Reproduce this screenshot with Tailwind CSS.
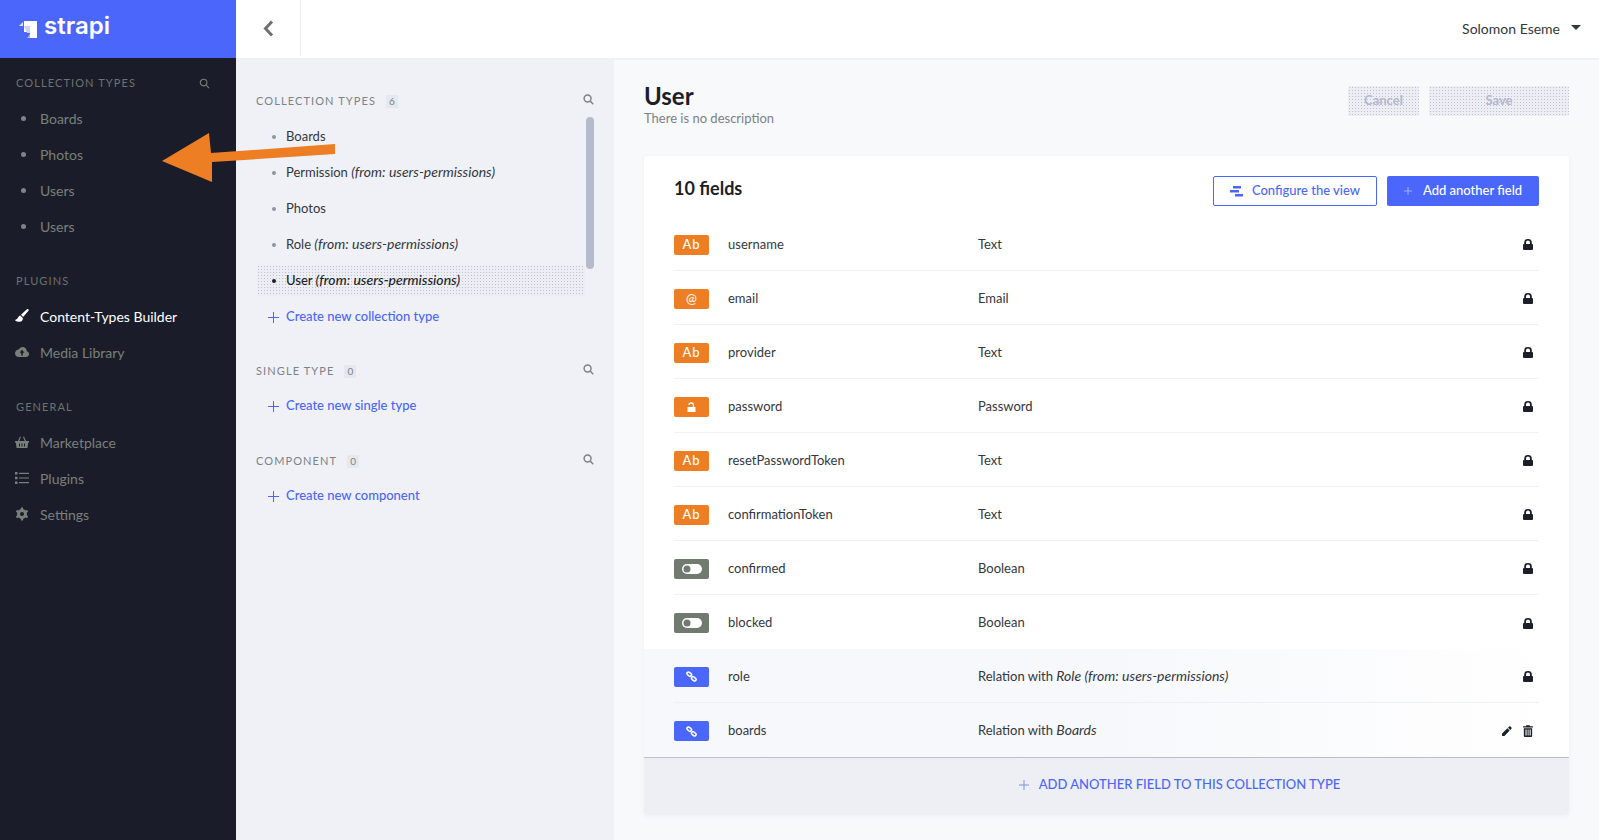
<!DOCTYPE html>
<html lang="en">
<head>
  <meta charset="UTF-8" />
  <title>Strapi - User</title>
  <script src="https://cdn.jsdelivr.net/npm/@tailwindcss/browser@4"></script>
</head>
<body class="[font-family:Lato,sans-serif] h-[840px] w-[1599px] overflow-hidden relative flex bg-[#f8f9fb] text-[13px] text-[#333740]">

  <!-- left nav -->
  <aside class="w-[236px] shrink-0 bg-[#1a1d29] h-full text-[14px] text-[#79807a]">
    <div class="h-[58px] bg-[#4b67fb] flex items-center pl-[18px] gap-[6px]">
      <svg width="20" height="20" viewBox="0 0 20 20"><path d="M6 2h13v17h-7v-6H6z" fill="#fff"/><path d="M6 7h6v7h-3z" fill="#c9d2fe"/><path d="M1 7l4-4v4z" fill="#dfe4fe"/><path d="M12 15v4H9z" fill="#a9b6fd"/></svg>
      <span class="[font-family:Inter,sans-serif] text-[24px] font-semibold text-white leading-none mb-[6px]">strapi</span>
    </div>

    <div class="pt-[17px] px-4 flex items-center justify-between pr-[26px] h-[34px]">
      <span class="text-[11px] tracking-[1.1px] uppercase text-[#6d726d]">Collection Types</span>
      <svg width="11" height="11" viewBox="0 0 12 12" fill="none" stroke="#79807a" stroke-width="1.200"><circle cx="5" cy="5" r="3.600"/><path d="M8 8l3 3"/></svg>
    </div>
    <ul class="pt-[8px]">
      <li class="h-9 flex items-center pl-[21px] gap-[14px]"><span class="size-[5px] rounded-full bg-[#7e857f]"></span>Boards</li>
      <li class="h-9 flex items-center pl-[21px] gap-[14px]"><span class="size-[5px] rounded-full bg-[#7e857f]"></span>Photos</li>
      <li class="h-9 flex items-center pl-[21px] gap-[14px]"><span class="size-[5px] rounded-full bg-[#7e857f]"></span>Users</li>
      <li class="h-9 flex items-center pl-[21px] gap-[14px]"><span class="size-[5px] rounded-full bg-[#7e857f]"></span>Users</li>
    </ul>

    <div class="mt-[28px] pl-4 text-[11px] tracking-[1.1px] uppercase text-[#6d726d] leading-[18px]">Plugins</div>
    <ul class="pt-[8px]">
      <li class="h-9 flex items-center pl-[15px] gap-[11px] text-white">
        <svg width="14" height="14" viewBox="0 0 14 14" fill="#fff"><path d="M13.400.3c-.4-.4-1-.4-1.500 0L6 5.800 8.100 8l5.400-6.200c.3-.4.300-1-.1-1.500z"/><path d="M5.200 6.500C3.300 6.700 3.500 9.600 .5 10.800c-.5.200-.4.700 0 1 2 1.600 6 1.500 7.200-1.100.3-.7.200-1.400-.1-1.900z"/></svg>
        Content-Types Builder
      </li>
      <li class="h-9 flex items-center pl-[15px] gap-[11px]">
        <svg width="14" height="14" viewBox="0 0 14 12" fill="#79807a"><path d="M11.800 5.200C11.700 2.800 9.900 1 7.600 1 5.900 1 4.500 2 3.800 3.400 1.700 3.500 0 5.200 0 7.300 0 9.400 1.800 11 3.800 11h7.100C12.600 11 14 9.700 14 8c0-1.300-.9-2.400-2.200-2.800z"/><path d="M7 3.800L4.500 6.800h1.700V9.500h1.600V6.800h1.700z" fill="#1a1d29"/></svg>
        Media Library
      </li>
    </ul>

    <div class="mt-[28px] pl-4 text-[11px] tracking-[1.1px] uppercase text-[#6d726d] leading-[18px]">General</div>
    <ul class="pt-[8px]">
      <li class="h-9 flex items-center pl-[15px] gap-[11px]">
        <svg width="14" height="14" viewBox="0 0 14 14" fill="#79807a"><path d="M0 6h14v1.500h-.8L12.400 13H1.600L.8 7.500H0z"/><path d="M3 6l2-4.500 1 .4L4.300 6zM11 6L9 1.500l-1 .4L9.700 6z"/><path d="M4.500 8.500v3M7 8.500v3M9.500 8.500v3" stroke="#1a1d29" stroke-width="1"/></svg>
        Marketplace
      </li>
      <li class="h-9 flex items-center pl-[15px] gap-[11px]">
        <svg width="14" height="14" viewBox="0 0 14 14" fill="#79807a"><path d="M0 1h2.500v2.500H0zM0 5.800h2.500v2.500H0zM0 10.500h2.500V13H0zM4 1.700h10v1.200H4zM4 6.400h10v1.200H4zM4 11.100h10v1.200H4z"/></svg>
        Plugins
      </li>
      <li class="h-9 flex items-center pl-[15px] gap-[11px]">
        <svg width="14" height="14" viewBox="0 0 14 14"><circle cx="7" cy="7" r="3.500" fill="none" stroke="#79807a" stroke-width="3"/><path d="M7 7L7 0.500M7 7L7 13.500M7 7L1.400 3.750M7 7l5.600 3.250M7 7l5.600-3.250M7 7l-5.600 3.250" stroke="#79807a" stroke-width="2.200"/><circle cx="7" cy="7" r="2" fill="#1a1d29"/></svg>
        Settings
      </li>
    </ul>
  </aside>

  <div class="flex-1 min-w-0 flex flex-col">
    <!-- top bar -->
    <header class="h-[60px] shrink-0 bg-white border-b-2 border-[#f0f1f4] flex items-center justify-between pb-[2px]">
      <div class="w-[65px] h-full border-r border-[#eeeef1] flex items-center justify-center">
        <svg width="11" height="17" viewBox="0 0 11 17" fill="none" stroke="#6b726c" stroke-width="3"><path d="M9 1.500L2.500 8.500 9 15.500"/></svg>
      </div>
      <div class="flex items-center gap-[11px] pr-[18px] text-[14px] text-[#333740]">
        Solomon Eseme
        <span class="border-x-[5px] border-x-transparent border-t-[5px] border-t-[#333740] mb-[1px]"></span>
      </div>
    </header>

    <div class="flex-1 flex min-h-0">
      <!-- content type list -->
      <section class="w-[378px] shrink-0 bg-[#f0f1f6] text-[#333740] pl-[20px] relative">
        <div class="flex items-center h-4 mt-[33px] pr-[20px]">
          <span class="text-[11px] tracking-[1.1px] uppercase text-[#7c8288]">Collection Types</span>
          <span class="ml-[10px] text-[10px] text-[#7c8288] bg-[#e6e8ef] px-[3px] leading-[13px]">6</span>
          <svg class="ml-auto mb-[4px]" width="11" height="11" viewBox="0 0 12 12" fill="none" stroke="#7c8288" stroke-width="1.600"><circle cx="5" cy="5" r="3.800"/><path d="M8 8l3.200 3.200"/></svg>
        </div>
        <ul class="mt-[10px] w-[328px] ml-[1px]">
          <li class="h-9 flex items-center pl-[15px] gap-[10px]"><span class="size-1 rounded-full bg-[#8f949c]"></span>Boards</li>
          <li class="h-9 flex items-center pl-[15px] gap-[10px]"><span class="size-1 rounded-full bg-[#8f949c]"></span><span class="-mt-[2px]">Permission <i class="text-[14px]">(from: users-permissions)</i></span></li>
          <li class="h-9 flex items-center pl-[15px] gap-[10px]"><span class="size-1 rounded-full bg-[#8f949c]"></span>Photos</li>
          <li class="h-9 flex items-center pl-[15px] gap-[10px]"><span class="size-1 rounded-full bg-[#8f949c]"></span><span class="-mt-[2px]">Role <i class="text-[14px]">(from: users-permissions)</i></span></li>
          <li class="h-[31px] mt-[2px] mb-[3px] flex items-center pl-[15px] gap-[10px] bg-[radial-gradient(#bcc1d4_0.8px,#eceef4_0.8px)] bg-[length:3px_3px] text-[#1c1e28] font-medium"><span class="size-1 rounded-full bg-[#1c1e28]"></span><span class="-mt-[2px]">User <i class="text-[14px]">(from: users-permissions)</i></span></li>
        </ul>
        <div class="h-9 flex items-center pl-[12px] gap-[7px] text-[#4b67fb] font-medium"><svg width="11" height="11" viewBox="0 0 11 11" stroke="#4b67fb"><path d="M5.500 0v11M0 5.500h11"/></svg>Create new collection type</div>
        <div class="absolute left-[350px] top-[57px] w-2 h-[152px] rounded-full bg-[#b5bacd]"></div>

        <div class="flex items-center h-4 mt-[28px] pr-[20px]">
          <span class="text-[11px] tracking-[1.1px] uppercase text-[#7c8288]">Single Type</span>
          <span class="ml-[10px] text-[10px] text-[#7c8288] bg-[#e6e8ef] px-[3px] leading-[13px]">0</span>
          <svg class="ml-auto mb-[4px]" width="11" height="11" viewBox="0 0 12 12" fill="none" stroke="#7c8288" stroke-width="1.600"><circle cx="5" cy="5" r="3.800"/><path d="M8 8l3.200 3.200"/></svg>
        </div>
        <div class="h-9 mt-[9px] flex items-center pl-[12px] gap-[7px] text-[#4b67fb] font-medium"><svg width="11" height="11" viewBox="0 0 11 11" stroke="#4b67fb"><path d="M5.500 0v11M0 5.500h11"/></svg>Create new single type</div>

        <div class="flex items-center h-4 mt-[29px] pr-[20px]">
          <span class="text-[11px] tracking-[1.1px] uppercase text-[#7c8288]">Component</span>
          <span class="ml-[10px] text-[10px] text-[#7c8288] bg-[#e6e8ef] px-[3px] leading-[13px]">0</span>
          <svg class="ml-auto mb-[4px]" width="11" height="11" viewBox="0 0 12 12" fill="none" stroke="#7c8288" stroke-width="1.600"><circle cx="5" cy="5" r="3.800"/><path d="M8 8l3.200 3.200"/></svg>
        </div>
        <div class="h-9 mt-[9px] flex items-center pl-[12px] gap-[7px] text-[#4b67fb] font-medium"><svg width="11" height="11" viewBox="0 0 11 11" stroke="#4b67fb"><path d="M5.500 0v11M0 5.500h11"/></svg>Create new component</div>
      </section>

      <!-- field editor -->
      <main class="flex-1 min-w-0 pl-[30px] pr-[30px]">
        <div class="flex justify-between items-start h-[96px]">
          <div class="pt-[22px]">
            <h1 class="text-[24px] font-bold text-[#1c1e28] leading-[28px]">User</h1>
            <p class="text-[13px] text-[#7c8288] leading-[16px]">There is no description</p>
          </div>
          <div class="flex gap-[10px] pt-[26px] font-bold text-[#b3b8cc]">
            <button class="w-[71px] h-[30px] bg-[radial-gradient(#bcc1d4_0.8px,#eceef4_0.8px)] bg-[length:3px_3px] rounded-[2px]">Cancel</button>
            <button class="w-[140px] h-[30px] bg-[radial-gradient(#bcc1d4_0.8px,#eceef4_0.8px)] bg-[length:3px_3px] rounded-[2px]">Save</button>
          </div>
        </div>

        <div class="bg-white rounded-[3px] shadow-[0_1px_4px_rgba(230,232,240,0.6)] overflow-hidden">
          <div class="h-[50px] flex items-end justify-between px-[30px]">
            <h2 class="text-[18px] font-bold text-[#1c1e28] mb-[6px] leading-[24px]">10 fields</h2>
            <div class="flex gap-[10px]">
              <button class="w-[164px] h-[30px] border border-[#4b67fb] rounded-[2px] bg-white text-[#4b67fb] font-medium flex items-center justify-center gap-[9px]">
                <svg width="13" height="11" viewBox="0 0 13 11" fill="#4b67fb"><path d="M3 0h8v2.500H3zM0 4h9v2.500H0zM5 8h8v2.500H5z"/></svg>
                Configure the view
              </button>
              <button class="w-[152px] h-[30px] rounded-[2px] bg-[#4b67fb] text-white font-medium flex items-center justify-center gap-[11px]">
                <svg width="8" height="8" viewBox="0 0 9 9" stroke="#aab6fd"><path d="M4.500 0v9M0 4.500h9"/></svg>
                Add another field
              </button>
            </div>
          </div>

          <div class="mt-[11px]">
            <div class="h-[54px] pt-[2px] mx-[30px] border-b border-[#f1f1f4] flex items-center">
              <span class="w-[35px] h-5 rounded-[2px] bg-[#ee7e23] text-white text-[13px] font-medium tracking-[1px] flex items-center justify-center">Ab</span>
              <span class="w-[250px] pl-[19px] shrink-0 text-[#333740] box-content">username</span>
              <span>Text</span>
              <svg class="ml-auto mr-[6px]" width="10" height="11" viewBox="0 0 10 11"><path d="M1.200 5V3.400a3.800 3.400 0 0 1 7.600 0V5h.2a1 1 0 0 1 1 1v4a1 1 0 0 1-1 1H1a1 1 0 0 1-1-1V6a1 1 0 0 1 1-1zm1.800 0h4V3.400a2 1.800 0 0 0-4 0z" fill="#1c1e28"/></svg>
            </div>
            <div class="h-[54px] pt-[2px] mx-[30px] border-b border-[#f1f1f4] flex items-center">
              <span class="w-[35px] h-5 rounded-[2px] bg-[#ee7e23] text-white text-[13px] flex items-center justify-center">@</span>
              <span class="w-[250px] pl-[19px] shrink-0 box-content">email</span>
              <span>Email</span>
              <svg class="ml-auto mr-[6px]" width="10" height="11" viewBox="0 0 10 11"><path d="M1.200 5V3.400a3.800 3.400 0 0 1 7.600 0V5h.2a1 1 0 0 1 1 1v4a1 1 0 0 1-1 1H1a1 1 0 0 1-1-1V6a1 1 0 0 1 1-1zm1.800 0h4V3.400a2 1.800 0 0 0-4 0z" fill="#1c1e28"/></svg>
            </div>
            <div class="h-[54px] pt-[2px] mx-[30px] border-b border-[#f1f1f4] flex items-center">
              <span class="w-[35px] h-5 rounded-[2px] bg-[#ee7e23] text-white text-[13px] font-medium tracking-[1px] flex items-center justify-center">Ab</span>
              <span class="w-[250px] pl-[19px] shrink-0 box-content">provider</span>
              <span>Text</span>
              <svg class="ml-auto mr-[6px]" width="10" height="11" viewBox="0 0 10 11"><path d="M1.200 5V3.400a3.800 3.400 0 0 1 7.600 0V5h.2a1 1 0 0 1 1 1v4a1 1 0 0 1-1 1H1a1 1 0 0 1-1-1V6a1 1 0 0 1 1-1zm1.800 0h4V3.400a2 1.800 0 0 0-4 0z" fill="#1c1e28"/></svg>
            </div>
            <div class="h-[54px] pt-[2px] mx-[30px] border-b border-[#f1f1f4] flex items-center">
              <span class="w-[35px] h-5 rounded-[2px] bg-[#ee7e23] flex items-center justify-center">
                <svg width="9" height="10" viewBox="0 0 9 10"><rect x="0.500" y="5" width="8" height="5" rx="0.500" fill="#fff"/><path d="M2 3a2.200 2.200 0 0 1 4.400 0v2" fill="none" stroke="#fff" stroke-width="1.200"/></svg>
              </span>
              <span class="w-[250px] pl-[19px] shrink-0 box-content">password</span>
              <span>Password</span>
              <svg class="ml-auto mr-[6px]" width="10" height="11" viewBox="0 0 10 11"><path d="M1.200 5V3.400a3.800 3.400 0 0 1 7.600 0V5h.2a1 1 0 0 1 1 1v4a1 1 0 0 1-1 1H1a1 1 0 0 1-1-1V6a1 1 0 0 1 1-1zm1.800 0h4V3.400a2 1.800 0 0 0-4 0z" fill="#1c1e28"/></svg>
            </div>
            <div class="h-[54px] pt-[2px] mx-[30px] border-b border-[#f1f1f4] flex items-center">
              <span class="w-[35px] h-5 rounded-[2px] bg-[#ee7e23] text-white text-[13px] font-medium tracking-[1px] flex items-center justify-center">Ab</span>
              <span class="w-[250px] pl-[19px] shrink-0 box-content">resetPasswordToken</span>
              <span>Text</span>
              <svg class="ml-auto mr-[6px]" width="10" height="11" viewBox="0 0 10 11"><path d="M1.200 5V3.400a3.800 3.400 0 0 1 7.600 0V5h.2a1 1 0 0 1 1 1v4a1 1 0 0 1-1 1H1a1 1 0 0 1-1-1V6a1 1 0 0 1 1-1zm1.800 0h4V3.400a2 1.800 0 0 0-4 0z" fill="#1c1e28"/></svg>
            </div>
            <div class="h-[54px] pt-[2px] mx-[30px] border-b border-[#f1f1f4] flex items-center">
              <span class="w-[35px] h-5 rounded-[2px] bg-[#ee7e23] text-white text-[13px] font-medium tracking-[1px] flex items-center justify-center">Ab</span>
              <span class="w-[250px] pl-[19px] shrink-0 box-content">confirmationToken</span>
              <span>Text</span>
              <svg class="ml-auto mr-[6px]" width="10" height="11" viewBox="0 0 10 11"><path d="M1.200 5V3.400a3.800 3.400 0 0 1 7.600 0V5h.2a1 1 0 0 1 1 1v4a1 1 0 0 1-1 1H1a1 1 0 0 1-1-1V6a1 1 0 0 1 1-1zm1.800 0h4V3.400a2 1.800 0 0 0-4 0z" fill="#1c1e28"/></svg>
            </div>
            <div class="h-[54px] pt-[2px] mx-[30px] border-b border-[#f1f1f4] flex items-center">
              <span class="w-[35px] h-5 rounded-[2px] bg-[#717a6f] flex items-center justify-center">
                <svg width="20" height="10" viewBox="0 0 20 10"><rect width="20" height="10" rx="5" fill="#fff"/><circle cx="5" cy="5" r="3.500" fill="#717a6f"/></svg>
              </span>
              <span class="w-[250px] pl-[19px] shrink-0 box-content">confirmed</span>
              <span>Boolean</span>
              <svg class="ml-auto mr-[6px]" width="10" height="11" viewBox="0 0 10 11"><path d="M1.200 5V3.400a3.800 3.400 0 0 1 7.600 0V5h.2a1 1 0 0 1 1 1v4a1 1 0 0 1-1 1H1a1 1 0 0 1-1-1V6a1 1 0 0 1 1-1zm1.800 0h4V3.400a2 1.800 0 0 0-4 0z" fill="#1c1e28"/></svg>
            </div>
            <div class="h-[54px] pt-[2px] mx-[30px] flex items-center">
              <span class="w-[35px] h-5 rounded-[2px] bg-[#717a6f] flex items-center justify-center">
                <svg width="20" height="10" viewBox="0 0 20 10"><rect width="20" height="10" rx="5" fill="#fff"/><circle cx="5" cy="5" r="3.500" fill="#717a6f"/></svg>
              </span>
              <span class="w-[250px] pl-[19px] shrink-0 box-content">blocked</span>
              <span>Boolean</span>
              <svg class="ml-auto mr-[6px]" width="10" height="11" viewBox="0 0 10 11"><path d="M1.200 5V3.400a3.800 3.400 0 0 1 7.600 0V5h.2a1 1 0 0 1 1 1v4a1 1 0 0 1-1 1H1a1 1 0 0 1-1-1V6a1 1 0 0 1 1-1zm1.800 0h4V3.400a2 1.800 0 0 0-4 0z" fill="#1c1e28"/></svg>
            </div>

            <!-- relation rows -->
            <div class="bg-gradient-to-r from-[#f7f8fb] from-50% to-white">
              <div class="h-[54px] pt-[2px] mx-[30px] border-b border-[#eff0f4] flex items-center">
                <span class="w-[35px] h-5 rounded-[2px] bg-[#4b67fb] flex items-center justify-center">
                  <svg width="11" height="11" viewBox="0 0 11 11" fill="none" stroke="#fff" stroke-width="1.500"><rect x="0.800" y="1.500" width="5" height="3" rx="1.500" transform="rotate(40 3 3)"/><rect x="5.200" y="6.500" width="5" height="3" rx="1.500" transform="rotate(40 8 8)"/></svg>
                </span>
                <span class="w-[250px] pl-[19px] shrink-0 box-content">role</span>
                <span class="-mt-[2px]">Relation with <i class="text-[14px]">Role (from: users-permissions)</i></span>
                <svg class="ml-auto mr-[6px]" width="10" height="11" viewBox="0 0 10 11"><path d="M1.200 5V3.400a3.800 3.400 0 0 1 7.600 0V5h.2a1 1 0 0 1 1 1v4a1 1 0 0 1-1 1H1a1 1 0 0 1-1-1V6a1 1 0 0 1 1-1zm1.800 0h4V3.400a2 1.800 0 0 0-4 0z" fill="#1c1e28"/></svg>
              </div>
              <div class="h-[54px] pt-[2px] mx-[30px] flex items-center">
                <span class="w-[35px] h-5 rounded-[2px] bg-[#4b67fb] flex items-center justify-center">
                  <svg width="11" height="11" viewBox="0 0 11 11" fill="none" stroke="#fff" stroke-width="1.500"><rect x="0.800" y="1.500" width="5" height="3" rx="1.500" transform="rotate(40 3 3)"/><rect x="5.200" y="6.500" width="5" height="3" rx="1.500" transform="rotate(40 8 8)"/></svg>
                </span>
                <span class="w-[250px] pl-[19px] shrink-0 box-content">boards</span>
                <span class="-mt-[2px]">Relation with <i class="text-[14px]">Boards</i></span>
                <span class="ml-auto mr-[6px] flex items-center gap-[11px]">
                  <svg width="10" height="10" viewBox="0 0 10 10" fill="#1c1e28"><path d="M7.200.6a1 1 0 0 1 1.400 0l.8.8a1 1 0 0 1 0 1.400L8.300 4 6 1.700zM5.400 2.300l2.300 2.300L2.400 9.900 0 10l.1-2.400z"/></svg>
                  <svg width="10" height="12" viewBox="0 0 9 11" fill="#1c1e28"><path d="M0 1.200h2.500L3 .2h3l.5 1H9v1.200H0zM.7 3h7.600v7a1 1 0 0 1-1 1H1.700a1 1 0 0 1-1-1zm1.500 1.200v5.500h1V4.200zm2 0v5.500h.8V4.200zm1.800 0v5.500h1V4.200z"/></svg>
                </span>
              </div>
            </div>
          </div>

          <div class="h-[58px] bg-[#eeeff4] border-t border-[#b9bed4] flex items-center justify-center gap-[10px] text-[13px] font-medium text-[#4b67fb] pl-[146px] pb-[4px]">
            <svg width="10" height="10" viewBox="0 0 10 10" stroke="#7f90e8"><path d="M5 0v10M0 5h10"/></svg>
            ADD ANOTHER FIELD TO THIS COLLECTION TYPE
          </div>
        </div>
      </main>
    </div>
  </div>

  <!-- annotation arrow over the page -->
  <svg class="absolute left-0 top-0 pointer-events-none" width="400" height="220" viewBox="0 0 400 220">
    <path d="M162 161L209 133 211 153 335 144 335 154 212 162 212 182z" fill="#ee7e23"/>
  </svg>
</body>
</html>
